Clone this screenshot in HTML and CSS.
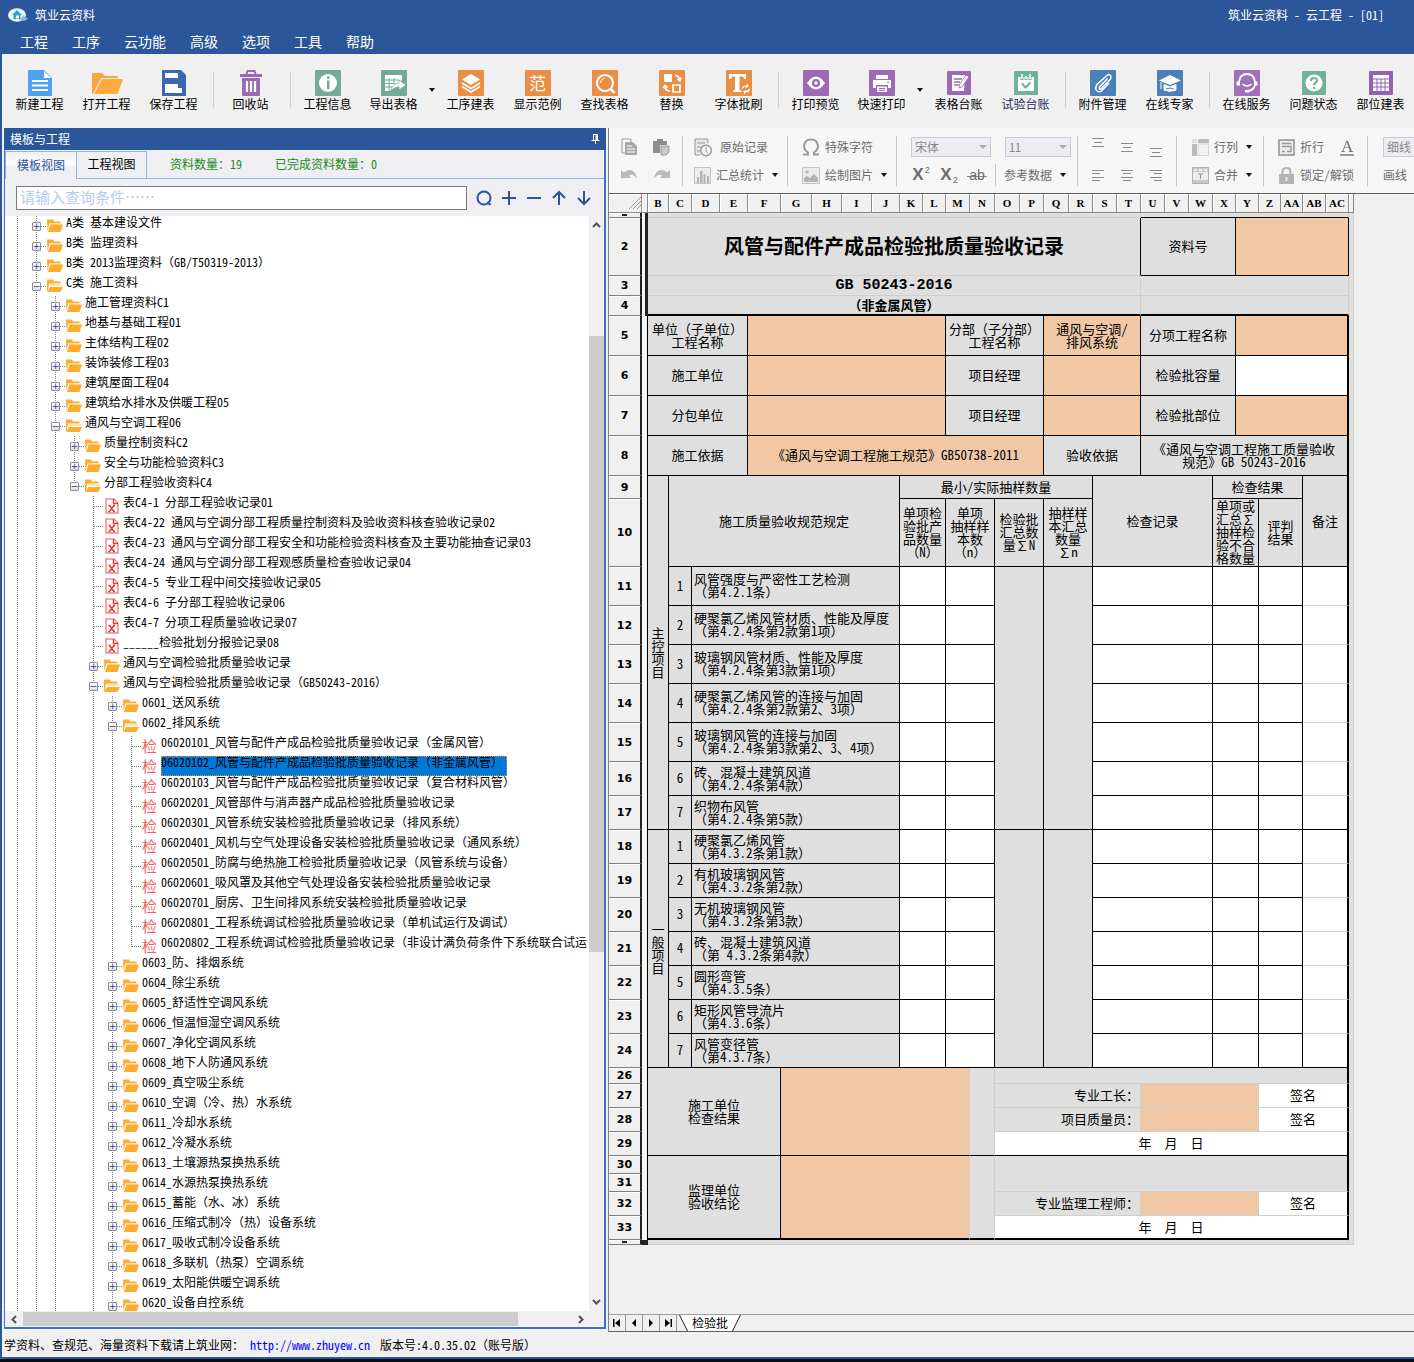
FILE: index.html
```html
<!DOCTYPE html>
<html lang="zh-CN">
<head>
<meta charset="utf-8">
<title>筑业云资料 - 云工程 - [01]</title>
<link rel="stylesheet" href="styles.css">
</head>
<body>
<svg class="defs" aria-hidden="true">
  <symbol id="closed" viewBox="0 0 16 14"><path d="M0 .5h6l1 2h6.500v2H2.500L.5 12z" fill="#ffab2b"/><path d="M2.500 4h12v1.500H3z" fill="#fbe3bd"/><path d="M3.500 5.500H16L13.500 13H1z" fill="#ffab2b"/></symbol>
  <symbol id="open" viewBox="0 0 16 14"><path d="M0 .5h6l1 2h6.500v2H2L1 12H0z" fill="#ffab2b"/><path d="M3 5h12v2H2.500z" fill="#fbe3bd"/><path d="M3 8h13l-2.500 5H.5z" fill="#ffab2b"/></symbol>
  <symbol id="xls" viewBox="0 0 14 16"><path d="M1 1h8l4 4v10H1z" fill="#fff" stroke="#f08a8a" stroke-width="1.500"/><path d="M8.500 1v4.500H13" fill="none" stroke="#e33" stroke-width="1.300"/><path d="M4.500 7.500l4.500 6M9 7.500l-4.500 6M3.500 7.500h2M8 7.500h2M3.500 13.500h2M8 13.500h2" stroke="#e12a2a" stroke-width="1.300"/></symbol>
</svg>
<div class="app">
  <header class="titlebar">
    <div class="caption">
      <svg width="22" height="16" viewBox="0 0 22 16"><ellipse cx="9" cy="8" rx="9" ry="6.800" fill="#eef5fb"/><path d="M11 13c4 1.500 7 1 9-2-2 0-3-1-4-3z" fill="#8cb6e4"/><path d="M4 8l5-5 5 5h-1.500v4h-7V8z" fill="#2f9fe0"/><path d="M8 8.500h3v3H8z" fill="#fff"/></svg>
      <span class="name">筑业云资料</span>
      <span class="doc">筑业云资料 - 云工程 - [01]</span>
    </div>
    <nav class="menu">
      <button>工程</button><button>工序</button><button>云功能</button><button>高级</button><button>选项</button><button>工具</button><button>帮助</button>
    </nav>
  </header>

  <div class="tools">
    <button class="tool"><svg viewBox="0 0 26 26"><path d="M1 1q0-1 1-1h15l8 8v17q0 1-1 1H2q-1 0-1-1z" fill="#4ea1f0"/><path d="M17 1v7h7z" fill="#fff"/><path d="M5 11h16M5 15.500h16M5 20h16" stroke="#fff" stroke-width="1.800"/></svg>新建工程</button>
    <button class="tool"><svg viewBox="0 0 34 26" class="wide"><path d="M2 4q0-1 1-1h9l3 3h12q1 0 1 2H11L3 24H2z" fill="#f9a63e"/><path d="M12 9h21l-5 14q0 1-1 1H4z" fill="#ffa940"/></svg>打开工程</button>
    <button class="tool"><svg viewBox="0 0 26 26"><path d="M1 0h19l5 5v21H1z" fill="#3a67ad"/><path d="M4 3h13v5H4zM4 14h17v9H4z" fill="#fff"/><path d="M17 14h4v4h-4z" fill="#3a67ad"/></svg>保存工程</button>
    <span class="sep"></span>
    <button class="tool"><svg viewBox="0 0 26 26"><path d="M2 4h22v3H2z" fill="#9b69b3"/><path d="M8.500 4l1-3h7l1 3" fill="none" stroke="#9b69b3" stroke-width="2"/><path d="M4 8h18v17q0 1-1 1H5q-1 0-1-1z" fill="#9b69b3"/><path d="M9 11v11M13 11v11M17 11v11" stroke="#fff" stroke-width="2.200"/></svg>回收站</button>
    <span class="sep"></span>
    <button class="tool"><svg viewBox="0 0 26 26"><rect width="26" height="26" rx="1" fill="#75aa99"/><circle cx="13" cy="13" r="9" fill="#fff"/><path d="M12 10.500h2.500V19H12zM12 6.500h2.500V9H12z" fill="#75aa99"/></svg>工程信息</button>
    <button class="tool drop"><svg viewBox="0 0 26 26"><rect width="26" height="26" rx="1" fill="#75aa99"/><path d="M4 5h17v5L9 21H4z" fill="#fff"/><path d="M4 10h14M4 13.500h9M4 17h7M8 8v13M13 8v6" stroke="#75aa99" stroke-width="1"/><path d="M10 21c1-6 5-8 8-8v-3l7 5-7 5v-3c-3 0-6 1-8 4z" fill="#fff" stroke="#75aa99" stroke-width=".8"/></svg>导出表格</button>
    <button class="caret" aria-label="导出表格"></button>
    <button class="tool"><svg viewBox="0 0 26 26"><rect width="26" height="26" rx="1" fill="#e98f45"/><path d="M13 4l9 5.500-9 5.500-9-5.500z" fill="#fff"/><path d="M4 13l9 5.500 9-5.500M4 16.500l9 5.500 9-5.500" fill="none" stroke="#fff" stroke-width="1.600"/></svg>工序建表</button>
    <button class="tool"><span class="glyph">范</span>显示范例</button>
    <button class="tool"><svg viewBox="0 0 26 26"><rect width="26" height="26" rx="1" fill="#e98f45"/><circle cx="13" cy="13" r="8" fill="none" stroke="#fff" stroke-width="2.200"/><path d="M18.500 18.500l4 4.500" stroke="#fff" stroke-width="2.600"/><path d="M8.500 13q0-4 4-5" stroke="#fff" fill="none"/></svg>查找表格</button>
    <button class="tool"><svg viewBox="0 0 26 26"><rect width="26" height="26" rx="1" fill="#e98f45"/><path d="M5 4h8v8H5z" fill="#fff"/><path d="M14 15h7v7h-7zM16 5.500q4 0 5 5M18.500 9l2.500 2 1-3.500M11 21q-5 0-5-5M4 18l2-2.500 2.500 2" fill="none" stroke="#fff" stroke-width="1.700"/></svg>替换</button>
    <button class="tool"><svg viewBox="0 0 26 26"><rect width="26" height="26" rx="1" fill="#e98f45"/><path d="M3 4h17v5h-2l-1-2.500h-3.500V20l2 .5V22H7v-1.500l2-.5V6.500H6L5 9H3z" fill="#fff"/><path d="M16.500 18.500q1-3.500 5-2.500M23.500 19q-1 3.500-5 2.500M21 14l1 2.500-2.500 1M19 24l-1-2.500 2.500-1" fill="none" stroke="#fff" stroke-width="1.200"/></svg>字体批刷</button>
    <span class="sep"></span>
    <button class="tool"><svg viewBox="0 0 26 26"><rect width="26" height="26" rx="1" fill="#9c69b7"/><path d="M4 13q9-13 18 0-9 13-18 0z" fill="#fff"/><circle cx="13" cy="13" r="4" fill="#9c69b7"/><circle cx="13" cy="13" r="1.700" fill="#fff"/></svg>打印预览</button>
    <button class="tool drop"><svg viewBox="0 0 26 26"><rect width="26" height="26" rx="1" fill="#9c69b7"/><path d="M7 5h12v4H7zM4 10h18v8h-3v-3H7v3H4zM8 16.500h10V22H8z" fill="#fff"/><path d="M10 18.500h6M10 20.300h6M18 12.300h2" stroke="#9c69b7"/></svg>快速打印</button>
    <button class="caret" aria-label="快速打印"></button>
    <button class="tool"><svg viewBox="0 0 26 26"><rect x="1" y="1" width="24" height="24" rx="1" fill="#9c69b7"/><path d="M6 5h13l-1 16H6z" fill="#fff"/><path d="M8 9h8M8 12h6M8 15h5" stroke="#9c69b7" stroke-width="1.300"/><path d="M20 5l3 2-7 10-3 1 .5-3.500z" fill="#fff" stroke="#9c69b7" stroke-width=".8"/></svg>表格台账</button>
    <button class="tool ink"><svg viewBox="0 0 26 26"><rect x="1" y="1" width="24" height="24" rx="1" fill="#6eb398"/><path d="M5 7h16v14H5z" fill="#fff"/><path d="M9 4v6M13 4v6M17 4v6" stroke="#6eb398" stroke-width="3"/><path d="M9 4v5M13 6v3M17 4v5" stroke="#fff" stroke-width="1.500"/><path d="M9 13.500l3.500 4 5-5" stroke="#6eb398" stroke-width="2" fill="none"/></svg>试验台账</button>
    <span class="sep"></span>
    <button class="tool"><svg viewBox="0 0 26 26"><rect width="26" height="26" rx="1" fill="#4a81b9"/><path d="M17.500 8.500l-8 8.500q-1 2.500 1.500 2l9.500-10q1.500-4-2.500-4.500L7 14.500q-3 5 1 7 2 1 4-1l7-7.500" fill="none" stroke="#fff" stroke-width="1.500"/></svg>附件管理</button>
    <button class="tool"><svg viewBox="0 0 26 26"><rect width="26" height="26" rx="1" fill="#4a81b9"/><path d="M13 5l11 5.500L13 15 2 10.500z" fill="#fff"/><path d="M7 14.500l6 2.500 6-2.500V20q-6 2.500-12 0zM4 12v7" fill="#fff" stroke="#fff"/><path d="M9 19q4-2 8 0" stroke="#4a81b9" fill="none"/></svg>在线专家</button>
    <span class="sep"></span>
    <button class="tool"><svg viewBox="0 0 26 26"><rect width="26" height="26" rx="1" fill="#a070ba"/><path d="M5 15V12q1-8 8-8t8 8v3M21 15q-1 5-7 6" fill="none" stroke="#fff" stroke-width="1.800"/><path d="M2.500 11.500H6v4H2.500zM20 11.500h3.500v4H20zM11 20h4v2.500h-4z" fill="#fff"/><path d="M8.500 14q4.500 4 9 0" fill="none" stroke="#fff" stroke-width="1.500"/></svg>在线服务</button>
    <button class="tool"><svg viewBox="0 0 26 26"><rect x="1" y="1" width="24" height="24" rx="1" fill="#6eb398"/><circle cx="13" cy="13" r="8.500" fill="#fff"/><path d="M10 11q0-3 3-3t3 2.500q0 1.500-1.500 2.300T13 15.500M13 17v2" fill="none" stroke="#6eb398" stroke-width="2.200"/></svg>问题状态</button>
    <button class="tool"><svg viewBox="0 0 26 26"><rect x="1" y="1" width="24" height="24" rx="1" fill="#9462b0"/><path d="M5 5h16v16H5z" fill="#fff"/><path d="M5 9h16M5 13h16M5 17h16M9 9v12M13 9v12M17 9v12" stroke="#9462b0"/></svg>部位建表</button>
  </div>

  <main class="work">
    <section class="panel">
      <h2 class="panel-head">模板与工程<svg width="9" height="10" viewBox="0 0 9 10"><path d="M2 0h5v6h1.500v1H5v3H4V7H.5V6H2z" fill="#fff"/><path d="M3 1h1.500v5H3z" fill="#2b579a"/></svg></h2>
      <div class="tabs">
        <button class="tab on">模板视图</button><button class="tab">工程视图</button>
        <span class="count">资料数量：19</span><span class="count">已完成资料数量：0</span>
      </div>
      <div class="search">
        <input type="text" placeholder="请输入查询条件……" aria-label="请输入查询条件">
        <button aria-label="查询"><svg viewBox="0 0 16 16"><circle cx="8" cy="8" r="6.500"/><path d="M11.500 12l3 3"/></svg></button>
        <button aria-label="展开"><svg viewBox="0 0 16 16"><path d="M8 1v14M1 8h14"/></svg></button>
        <button aria-label="折叠"><svg viewBox="0 0 16 16"><path d="M1 8h14"/></svg></button>
        <button aria-label="上一个"><svg viewBox="0 0 16 16"><path d="M8 15V2M2 8l6-6 6 6"/></svg></button>
        <button aria-label="下一个"><svg viewBox="0 0 16 16"><path d="M8 1v13M2 8l6 6 6-6"/></svg></button>
      </div>
      <div class="view">
        <div class="tree">
          <ul>
            <li><p><button>+</button><svg><use href="#closed"/></svg><a>A类 基本建设文件</a></p></li>
            <li><p><button>+</button><svg><use href="#closed"/></svg><a>B类 监理资料</a></p></li>
            <li><p><button>+</button><svg><use href="#closed"/></svg><a>B类 2013监理资料（GB/T50319-2013）</a></p></li>
            <li class="more"><p><button>−</button><svg><use href="#open"/></svg><a>C类 施工资料</a></p>
              <ul>
                <li><p><button>+</button><svg><use href="#closed"/></svg><a>施工管理资料C1</a></p></li>
                <li><p><button>+</button><svg><use href="#closed"/></svg><a>地基与基础工程01</a></p></li>
                <li><p><button>+</button><svg><use href="#closed"/></svg><a>主体结构工程02</a></p></li>
                <li><p><button>+</button><svg><use href="#closed"/></svg><a>装饰装修工程03</a></p></li>
                <li><p><button>+</button><svg><use href="#closed"/></svg><a>建筑屋面工程04</a></p></li>
                <li><p><button>+</button><svg><use href="#closed"/></svg><a>建筑给水排水及供暖工程05</a></p></li>
                <li class="more"><p><button>−</button><svg><use href="#open"/></svg><a>通风与空调工程06</a></p>
                  <ul>
                    <li><p><button>+</button><svg><use href="#closed"/></svg><a>质量控制资料C2</a></p></li>
                    <li><p><button>+</button><svg><use href="#closed"/></svg><a>安全与功能检验资料C3</a></p></li>
                    <li><p><button>−</button><svg><use href="#open"/></svg><a>分部工程验收资料C4</a></p>
                      <ul>
                        <li><p class="leaf"><svg><use href="#xls"/></svg><a>表C4-1 分部工程验收记录01</a></p></li>
                        <li><p class="leaf"><svg><use href="#xls"/></svg><a>表C4-22 通风与空调分部工程质量控制资料及验收资料核查验收记录02</a></p></li>
                        <li><p class="leaf"><svg><use href="#xls"/></svg><a>表C4-23 通风与空调分部工程安全和功能检验资料核查及主要功能抽查记录03</a></p></li>
                        <li><p class="leaf"><svg><use href="#xls"/></svg><a>表C4-24 通风与空调分部工程观感质量检查验收记录04</a></p></li>
                        <li><p class="leaf"><svg><use href="#xls"/></svg><a>表C4-5 专业工程中间交接验收记录05</a></p></li>
                        <li><p class="leaf"><svg><use href="#xls"/></svg><a>表C4-6 子分部工程验收记录06</a></p></li>
                        <li><p class="leaf"><svg><use href="#xls"/></svg><a>表C4-7 分项工程质量验收记录07</a></p></li>
                        <li><p class="leaf"><svg><use href="#xls"/></svg><a>______检验批划分报验记录08</a></p></li>
                        <li><p><button>+</button><svg><use href="#closed"/></svg><a>通风与空调检验批质量验收记录</a></p></li>
                        <li class="more"><p><button>−</button><svg><use href="#open"/></svg><a>通风与空调检验批质量验收记录（GB50243-2016）</a></p>
                          <ul>
                            <li><p><button>+</button><svg><use href="#closed"/></svg><a>0601_送风系统</a></p></li>
                            <li><p><button>−</button><svg><use href="#open"/></svg><a>0602_排风系统</a></p>
                              <ul>
                                <li><p class="leaf"><b>检</b><a>06020101_风管与配件产成品检验批质量验收记录（金属风管）</a></p></li>
                                <li><p class="leaf"><b>检</b><a class="sel">06020102_风管与配件产成品检验批质量验收记录（非金属风管）</a></p></li>
                                <li><p class="leaf"><b>检</b><a>06020103_风管与配件产成品检验批质量验收记录（复合材料风管）</a></p></li>
                                <li><p class="leaf"><b>检</b><a>06020201_风管部件与消声器产成品检验批质量验收记录</a></p></li>
                                <li><p class="leaf"><b>检</b><a>06020301_风管系统安装检验批质量验收记录（排风系统）</a></p></li>
                                <li><p class="leaf"><b>检</b><a>06020401_风机与空气处理设备安装检验批质量验收记录（通风系统）</a></p></li>
                                <li><p class="leaf"><b>检</b><a>06020501_防腐与绝热施工检验批质量验收记录（风管系统与设备）</a></p></li>
                                <li><p class="leaf"><b>检</b><a>06020601_吸风罩及其他空气处理设备安装检验批质量验收记录</a></p></li>
                                <li><p class="leaf"><b>检</b><a>06020701_厨房、卫生间排风系统安装检验批质量验收记录</a></p></li>
                                <li><p class="leaf"><b>检</b><a>06020801_工程系统调试检验批质量验收记录（单机试运行及调试）</a></p></li>
                                <li><p class="leaf"><b>检</b><a>06020802_工程系统调试检验批质量验收记录（非设计满负荷条件下系统联合试运</a></p></li>
                              </ul></li>
                            <li><p><button>+</button><svg><use href="#closed"/></svg><a>0603_防、排烟系统</a></p></li>
                            <li><p><button>+</button><svg><use href="#closed"/></svg><a>0604_除尘系统</a></p></li>
                            <li><p><button>+</button><svg><use href="#closed"/></svg><a>0605_舒适性空调风系统</a></p></li>
                            <li><p><button>+</button><svg><use href="#closed"/></svg><a>0606_恒温恒湿空调风系统</a></p></li>
                            <li><p><button>+</button><svg><use href="#closed"/></svg><a>0607_净化空调风系统</a></p></li>
                            <li><p><button>+</button><svg><use href="#closed"/></svg><a>0608_地下人防通风系统</a></p></li>
                            <li><p><button>+</button><svg><use href="#closed"/></svg><a>0609_真空吸尘系统</a></p></li>
                            <li><p><button>+</button><svg><use href="#closed"/></svg><a>0610_空调（冷、热）水系统</a></p></li>
                            <li><p><button>+</button><svg><use href="#closed"/></svg><a>0611_冷却水系统</a></p></li>
                            <li><p><button>+</button><svg><use href="#closed"/></svg><a>0612_冷凝水系统</a></p></li>
                            <li><p><button>+</button><svg><use href="#closed"/></svg><a>0613_土壤源热泵换热系统</a></p></li>
                            <li><p><button>+</button><svg><use href="#closed"/></svg><a>0614_水源热泵换热系统</a></p></li>
                            <li><p><button>+</button><svg><use href="#closed"/></svg><a>0615_蓄能（水、冰）系统</a></p></li>
                            <li><p><button>+</button><svg><use href="#closed"/></svg><a>0616_压缩式制冷（热）设备系统</a></p></li>
                            <li><p><button>+</button><svg><use href="#closed"/></svg><a>0617_吸收式制冷设备系统</a></p></li>
                            <li><p><button>+</button><svg><use href="#closed"/></svg><a>0618_多联机（热泵）空调系统</a></p></li>
                            <li><p><button>+</button><svg><use href="#closed"/></svg><a>0619_太阳能供暖空调系统</a></p></li>
                            <li class="more"><p><button>+</button><svg><use href="#closed"/></svg><a>0620_设备自控系统</a></p></li>
                          </ul></li>
                      </ul></li>
                  </ul></li>
              </ul></li>
          </ul>
        </div>
        <div class="vbar"><svg viewBox="0 0 9 6"><path d="M1 5l3.500-3.500L8 5"/></svg><span class="gap-a"></span><span class="thumb"></span><span class="gap-b"></span><svg viewBox="0 0 9 6"><path d="M1 1l3.500 3.500L8 1"/></svg></div>
      </div>
      <div class="hbar"><svg viewBox="0 0 6 9"><path d="M5 1L1.500 4.500 5 8"/></svg><span class="thumb"></span><span class="rest"></span><svg viewBox="0 0 6 9"><path d="M1 1l3.500 3.500L1 8"/></svg></div>
    </section>

    <section class="editor">
      <div class="ribbon">
        <div class="group g-clip">
          <div class="line"><button aria-label="复制"><svg width="17" height="18" viewBox="0 0 17 18"><path d="M1 1h9v3M4 15H1V1" fill="none" stroke="#999"/><path d="M4 4h8l4 4v9H4z" fill="#a8a8a8"/><path d="M6 8h5M6 11h8M6 14h8" stroke="#fff"/></svg></button><button aria-label="粘贴"><svg width="17" height="18" viewBox="0 0 17 18"><path d="M0 3h4V1h6v2h4v4H7v8H0z" fill="#8e8e8e"/><path d="M8 8h8v6l-3 3H8z" fill="#c8c8c8" stroke="#999"/></svg></button></div>
          <div class="line"><button aria-label="撤销"><svg width="17" height="12" viewBox="0 0 17 12"><path d="M0 1l3 2.500Q7 0 11 1.500t5 8.500q-3-5-8-4L10 9H0z" fill="#b9b9b9"/></svg></button><button aria-label="重做"><svg width="17" height="12" viewBox="0 0 17 12"><path d="M17 1l-3 2.500Q10 0 6 1.500T1 10q3-5 8-4L7 9h10z" fill="#b9b9b9"/></svg></button></div>
        </div>
        <div class="group g-rec">
          <div class="line"><button><svg width="18" height="19" viewBox="0 0 18 19"><path d="M6 17H1V1h13v4" fill="#e6e6e6" stroke="#999"/><path d="M3 5h8M3 9h4M3 13h3" stroke="#999"/><circle cx="12" cy="12.500" r="5.300" fill="#f5f5f5" stroke="#999" stroke-width="1.400"/><path d="M12 9v4l2.500 2" fill="none" stroke="#999"/></svg><span class="wide">原始记录</span></button></div>
          <div class="line"><button><svg width="17" height="17" viewBox="0 0 17 17"><path d="M.5.500h16v16H.5z" fill="#ececec" stroke="#c4c4c4"/><path d="M3 10h2v6H3zM6 4h2.500v12H6zM9.500 7h2v9h-2zM13 9h2v7h-2z" fill="#b3b3b3"/></svg>汇总统计<i></i></button></div>
        </div>
        <div class="group g-sym">
          <div class="line"><button><svg width="18" height="18" viewBox="0 0 18 18"><path d="M1 16.500h5v-2Q2 12 2 7.500 3 1.500 9 1.500t7 6q0 4.500-4 7v2h5" fill="none" stroke="#999" stroke-width="2"/></svg>特殊字符</button></div>
          <div class="line"><button><svg width="18" height="17" viewBox="0 0 18 17"><path d="M.5.500h17v16H.5z" fill="#ececec" stroke="#c4c4c4"/><path d="M2 15v-4l3-2 3 2 4-4 4 4v4z" fill="#b3b3b3"/><circle cx="5" cy="5" r="1.500" fill="#b3b3b3"/></svg>绘制图片<i></i></button></div>
        </div>
        <div class="group g-font">
          <div class="line"><span class="pick p-font"><select aria-label="字体"><option>宋体</option></select></span><span class="pick p-size"><select aria-label="字号"><option>11</option></select></span></div>
          <div class="line"><button class="x">X<sup>2</sup></button><button class="x">X<sub>2</sub></button><button class="ab">ab</button><span class="mini"></span><button>参考数据<i></i></button></div>
        </div>
        <div class="group g-align">
          <div class="line"><button aria-label="顶端对齐"><svg class="up" width="12" height="9" viewBox="0 0 12 9"><path d="M0 .5h12M2 4.500h8M0 8.500h12"/></svg></button><button aria-label="垂直居中"><svg width="12" height="9" viewBox="0 0 12 9"><path d="M0 .5h12M2 4.500h8M0 8.500h12"/></svg></button><button aria-label="底端对齐"><svg class="down" width="12" height="9" viewBox="0 0 12 9"><path d="M0 .5h12M2 4.500h8M0 8.500h12"/></svg></button></div>
          <div class="line"><button aria-label="左对齐"><svg width="12" height="11" viewBox="0 0 12 11"><path d="M0 .5h12M0 3.500h8M0 7.500h12M0 10.500h8"/></svg></button><button aria-label="居中"><svg width="12" height="11" viewBox="0 0 12 11"><path d="M0 .5h12M2 3.500h8M0 7.500h12M2 10.500h8"/></svg></button><button aria-label="右对齐"><svg width="12" height="11" viewBox="0 0 12 11"><path d="M0 .5h12M4 3.500h8M0 7.500h12M4 10.500h8"/></svg></button></div>
        </div>
        <div class="group g-cell">
          <div class="line"><button><svg width="17" height="17" viewBox="0 0 17 17"><path d="M0 0h5v4H0z" fill="#ddd"/><path d="M6 0h11v4H6zM0 5h5v12H0z" fill="#bbb"/><path d="M6 5h10.500v11.500H6z" fill="#f1f1f1" stroke="#d4d4d4"/></svg>行列<i></i></button></div>
          <div class="line"><button><svg width="17" height="17" viewBox="0 0 17 17"><path d="M.5.500h16v16H.5z" fill="#c9c9c9" stroke="#b0b0b0"/><path d="M2 2h3v2H2zM7 2h3v2H7zM12 2h3v2h-3zM1 5h15v8H1z" fill="#ececec"/><path d="M6 7h5M8.500 7v5" stroke="#999"/></svg>合并<i></i></button></div>
        </div>
        <div class="group g-wrap">
          <div class="line"><button><svg width="17" height="17" viewBox="0 0 17 17"><path d="M1 1h15v15H1z" fill="#ececec" stroke="#909090" stroke-width="1.500"/><path d="M4 4.500h9M4 7.500h9v5H9M4 12.500h3" fill="none" stroke="#999" stroke-width="1.400"/></svg>折行</button><button class="fc">A</button></div>
          <div class="line"><button><svg width="17" height="17" viewBox="0 0 17 17"><path d="M4.500 8V4.500q0-3.500 4-3.500t4 3.500V8" fill="none" stroke="#b3b3b3" stroke-width="2"/><path d="M1 7h15v9q0 1-1 1H2q-1 0-1-1z" fill="#b3b3b3"/><path d="M7.500 10h2v4h-2z" fill="#eee"/></svg><span>锁定/解锁</span></button></div>
        </div>
        <div class="group g-pen">
          <div class="line"><span class="pick p-pen"><select aria-label="线型"><option>细线</option></select></span></div>
          <div class="line"><button>画线</button></div>
        </div>
      </div>

      <div class="sheet">
        <table>
          <colgroup><col class="c33"><col class="c6"><col class="c21"><col class="c23"><col class="c28"><col class="c28"><col class="c33"><col class="c31"><col class="c30"><col class="c30"><col class="c28"><col class="c23"><col class="c23"><col class="c24"><col class="c25"><col class="c25"><col class="c24"><col class="c25"><col class="c24"><col class="c24"><col class="c24"><col class="c24"><col class="c24"><col class="c24"><col class="c23"><col class="c23"><col class="c22"><col class="c22"><col class="c23"><col class="c23"><col class="c5"></colgroup>
          <thead>
            <tr class="h19"><th class="corner"><svg width="12" height="12" viewBox="0 0 12 12"><path d="M0 12L12 0M4 12l8-8M8 12l4-4" stroke="#999"/></svg></th><th></th><th>B</th><th>C</th><th>D</th><th>E</th><th>F</th><th>G</th><th>H</th><th>I</th><th>J</th><th>K</th><th>L</th><th>M</th><th>N</th><th>O</th><th>P</th><th>Q</th><th>R</th><th>S</th><th>T</th><th>U</th><th>V</th><th>W</th><th>X</th><th>Y</th><th>Z</th><th>AA</th><th>AB</th><th>AC</th><th></th></tr>
          </thead>
          <tbody>
            <tr class="h5"><th><b></b></th><td class="edge dark" rowspan="4"></td><td colspan="19" class="gb gr"></td><td colspan="9" class="gr"></td><td class="tail" rowspan="33"></td></tr>
            <tr class="h58"><th>2</th><td colspan="19" class="title gb">风管与配件产成品检验批质量验收记录</td><td colspan="4">资料号</td><td colspan="5" class="o">&nbsp;</td></tr>
            <tr class="h20"><th>3</th><td colspan="19" class="code gb gr">GB 50243-2016</td><td colspan="9" class="gb gr"></td></tr>
            <tr class="h20"><th>4</th><td colspan="19" class="sub gr thick">（非金属风管）</td><td colspan="9" class="gr thick"></td></tr>
            <tr class="h40"><th>5</th><td class="edge" rowspan="28"></td><td colspan="4">单位（子单位）<br>工程名称</td><td colspan="7" class="o"></td><td colspan="4">分部（子分部）<br>工程名称</td><td colspan="4" class="o">通风与空调/<br>排风系统</td><td colspan="4">分项工程名称</td><td colspan="5" class="o end"></td></tr>
            <tr class="h40"><th>6</th><td colspan="4">施工单位</td><td colspan="7" class="o"></td><td colspan="4">项目经理</td><td colspan="4" class="o"></td><td colspan="4">检验批容量</td><td colspan="5" class="w end"></td></tr>
            <tr class="h40"><th>7</th><td colspan="4">分包单位</td><td colspan="7" class="o"></td><td colspan="4">项目经理</td><td colspan="4" class="o"></td><td colspan="4">检验批部位</td><td colspan="5" class="o end"></td></tr>
            <tr class="h40"><th>8</th><td colspan="4">施工依据</td><td colspan="11" class="o">《通风与空调工程施工规范》GB50738-2011</td><td colspan="4">验收依据</td><td colspan="9" class="end">《通风与空调工程施工质量验收<br>规范》GB 50243-2016</td></tr>
            <tr class="h23"><th>9</th><td rowspan="9">主<br>控<br>项<br>目</td><td colspan="8" rowspan="2">施工质量验收规范规定</td><td colspan="8">最小/实际抽样数量</td><td colspan="5" rowspan="2">检查记录</td><td colspan="4">检查结果</td><td colspan="2" rowspan="2" class="end">备注</td></tr>
            <tr class="h68"><th>10</th><td colspan="2">单项检<br>验批产<br>品数量<br>（N）</td><td colspan="2">单项<br>抽样样<br>本数<br>（n）</td><td colspan="2">检验批<br>汇总数<br>量∑N</td><td colspan="2">抽样样<br>本汇总<br>数量<br>∑n</td><td colspan="2">单项或<br>汇总∑<br>抽样检<br>验不合<br>格数量</td><td colspan="2">评判<br>结果</td></tr>
            <tr class="h39"><th>11</th><td>1</td><td colspan="7" class="l">风管强度与严密性工艺检测<br>（第4.2.1条）</td><td colspan="2" class="w"></td><td colspan="2" class="w"></td><td colspan="2" rowspan="7"></td><td colspan="2" rowspan="7"></td><td colspan="5" class="w"></td><td colspan="2" class="w"></td><td colspan="2" class="w"></td><td colspan="2" class="w gb end"></td></tr>
            <tr class="h39"><th>12</th><td>2</td><td colspan="7" class="l">硬聚氯乙烯风管材质、性能及厚度<br>（第4.2.4条第2款第1项）</td><td colspan="2" class="w"></td><td colspan="2" class="w"></td><td colspan="5" class="w"></td><td colspan="2" class="w"></td><td colspan="2" class="w"></td><td colspan="2" class="w gb end"></td></tr>
            <tr class="h39"><th>13</th><td>3</td><td colspan="7" class="l">玻璃钢风管材质、性能及厚度<br>（第4.2.4条第3款第1项）</td><td colspan="2" class="w"></td><td colspan="2" class="w"></td><td colspan="5" class="w"></td><td colspan="2" class="w"></td><td colspan="2" class="w"></td><td colspan="2" class="w gb end"></td></tr>
            <tr class="h39"><th>14</th><td>4</td><td colspan="7" class="l">硬聚氯乙烯风管的连接与加固<br>（第4.2.4条第2款第2、3项）</td><td colspan="2" class="w"></td><td colspan="2" class="w"></td><td colspan="5" class="w"></td><td colspan="2" class="w"></td><td colspan="2" class="w"></td><td colspan="2" class="w gb end"></td></tr>
            <tr class="h39"><th>15</th><td>5</td><td colspan="7" class="l">玻璃钢风管的连接与加固<br>（第4.2.4条第3款第2、3、4项）</td><td colspan="2" class="w"></td><td colspan="2" class="w"></td><td colspan="5" class="w"></td><td colspan="2" class="w"></td><td colspan="2" class="w"></td><td colspan="2" class="w gb end"></td></tr>
            <tr class="h34"><th>16</th><td>6</td><td colspan="7" class="l">砖、混凝土建筑风道<br>（第4.2.4条第4款）</td><td colspan="2" class="w"></td><td colspan="2" class="w"></td><td colspan="5" class="w"></td><td colspan="2" class="w"></td><td colspan="2" class="w"></td><td colspan="2" class="w gb end"></td></tr>
            <tr class="h34"><th>17</th><td>7</td><td colspan="7" class="l">织物布风管<br>（第4.2.4条第5款）</td><td colspan="2" class="w"></td><td colspan="2" class="w"></td><td colspan="5" class="w"></td><td colspan="2" class="w"></td><td colspan="2" class="w"></td><td colspan="2" class="w end"></td></tr>
            <tr class="h34"><th>18</th><td rowspan="7">一<br>般<br>项<br>目</td><td>1</td><td colspan="7" class="l">硬聚氯乙烯风管<br>（第4.3.2条第1款）</td><td colspan="2" class="w"></td><td colspan="2" class="w"></td><td colspan="2" rowspan="7"></td><td colspan="2" rowspan="7"></td><td colspan="5" class="w"></td><td colspan="2" class="w"></td><td colspan="2" class="w"></td><td colspan="2" class="w gb end"></td></tr>
            <tr class="h34"><th>19</th><td>2</td><td colspan="7" class="l">有机玻璃钢风管<br>（第4.3.2条第2款）</td><td colspan="2" class="w"></td><td colspan="2" class="w"></td><td colspan="5" class="w"></td><td colspan="2" class="w"></td><td colspan="2" class="w"></td><td colspan="2" class="w gb end"></td></tr>
            <tr class="h34"><th>20</th><td>3</td><td colspan="7" class="l">无机玻璃钢风管<br>（第4.3.2条第3款）</td><td colspan="2" class="w"></td><td colspan="2" class="w"></td><td colspan="5" class="w"></td><td colspan="2" class="w"></td><td colspan="2" class="w"></td><td colspan="2" class="w gb end"></td></tr>
            <tr class="h34"><th>21</th><td>4</td><td colspan="7" class="l">砖、混凝土建筑风道<br>（第 4.3.2条第4款）</td><td colspan="2" class="w"></td><td colspan="2" class="w"></td><td colspan="5" class="w"></td><td colspan="2" class="w"></td><td colspan="2" class="w"></td><td colspan="2" class="w gb end"></td></tr>
            <tr class="h34"><th>22</th><td>5</td><td colspan="7" class="l">圆形弯管<br>（第4.3.5条）</td><td colspan="2" class="w"></td><td colspan="2" class="w"></td><td colspan="5" class="w"></td><td colspan="2" class="w"></td><td colspan="2" class="w"></td><td colspan="2" class="w gb end"></td></tr>
            <tr class="h34"><th>23</th><td>6</td><td colspan="7" class="l">矩形风管导流片<br>（第4.3.6条）</td><td colspan="2" class="w"></td><td colspan="2" class="w"></td><td colspan="5" class="w"></td><td colspan="2" class="w"></td><td colspan="2" class="w"></td><td colspan="2" class="w gb end"></td></tr>
            <tr class="h34"><th>24</th><td>7</td><td colspan="7" class="l">风管变径管<br>（第4.3.7条）</td><td colspan="2" class="w"></td><td colspan="2" class="w"></td><td colspan="5" class="w"></td><td colspan="2" class="w"></td><td colspan="2" class="w"></td><td colspan="2" class="w end"></td></tr>
            <tr class="h16"><th>26</th><td colspan="5" rowspan="4">施工单位<br>检查结果</td><td colspan="7" rowspan="4" class="o gr"></td><td rowspan="4" class="gr"></td><td colspan="15" class="gb end"></td></tr>
            <tr class="h24"><th>27</th><td colspan="6" class="r gb gr">专业工长：</td><td colspan="5" class="o gb gr"></td><td colspan="4" class="w gb end">签名</td></tr>
            <tr class="h24"><th>28</th><td colspan="6" class="r gb gr">项目质量员：</td><td colspan="5" class="o gb gr"></td><td colspan="4" class="w gb end">签名</td></tr>
            <tr class="h24"><th>29</th><td colspan="15" class="w end">年　月　日</td></tr>
            <tr class="h18"><th>30</th><td colspan="5" rowspan="4" class="thick">监理单位<br>验收结论</td><td colspan="7" rowspan="4" class="o gr thick"></td><td rowspan="4" class="gr thick"></td><td colspan="15" rowspan="2" class="gb end"></td></tr>
            <tr class="h18"><th>31</th></tr>
            <tr class="h24"><th>32</th><td colspan="6" class="r gb gr">专业监理工程师：</td><td colspan="5" class="o gb gr"></td><td colspan="4" class="w gb end">签名</td></tr>
            <tr class="h24"><th>33</th><td colspan="15" class="w end thick">年　月　日</td></tr>
            <tr class="h5"><th><b></b></th><td class="knob"></td><td colspan="28" class="gb gr"></td></tr>
          </tbody>
        </table>
      </div>
      <div class="sheetbar">
        <button aria-label="第一页"><svg viewBox="0 0 8 8"><path d="M0 0h1.500v8H0zM7 0v8L2 4z"/></svg></button><button aria-label="上一页"><svg viewBox="0 0 8 8"><path d="M6 0v8L2 4z"/></svg></button><button aria-label="下一页"><svg viewBox="0 0 8 8"><path d="M2 0v8l4-4z"/></svg></button><button aria-label="最后一页"><svg viewBox="0 0 8 8"><path d="M6.500 0H8v8H6.500zM1 0v8l5-4z"/></svg></button>
        <button class="page"><svg width="9" height="16" viewBox="0 0 9 16"><path d="M1 0h8v16z" fill="#fff"/><path d="M.5 0l8 16" stroke="#222"/></svg><span>检验批</span><svg width="9" height="16" viewBox="0 0 9 16"><path d="M0 0h8L0 16z" fill="#fff"/><path d="M8.500 0l-8 16" stroke="#222"/></svg></button>
      </div>
    </section>
  </main>

  <footer class="status">学资料、查规范、海量资料下载请上筑业网：<a href="http://www.zhuyew.cn">http://www.zhuyew.cn</a><span>版本号:4.0.35.02（账号版）</span></footer>
</div>
</body>
</html>
```

FILE: styles.css
```css
* { box-sizing: border-box; }
html, body { height: 100%; }
body {
  margin: 0;
  padding-bottom: 3px;
  background: #080e18;
  color: #000;
  font: 12px/16px "Noto Sans Mono CJK SC", "Noto Sans CJK SC", sans-serif;
}
button, input, select { font: inherit; color: inherit; margin: 0; }
button { padding: 0; border: 0; background: none; white-space: nowrap; }
h2, p, ul { margin: 0; padding: 0; }
.defs { display: none; }

.app {
  display: flex;
  flex-direction: column;
  height: 100%;
  overflow: hidden;
  background: #f0f0f0;
  border-left: 2px solid #2b579a;
  border-bottom: 2px solid #2b579a;
}

/* title and menu */
.titlebar { flex: none; background: #2b579a; color: #fff; margin-left: -2px; height: 54px; }
.caption { display: flex; align-items: center; height: 30px; padding: 0 30px 0 8px; }
.caption .name { margin-left: 5px; }
.caption .doc { margin-left: auto; }
.menu { display: flex; gap: 24px; padding-left: 20px; font-size: 14px; line-height: 22px; }

/* main toolbar */
.tools { flex: none; display: flex; height: 73px; padding: 16px 0 0 4px; overflow: hidden; }
.tool { flex: none; width: 67px; display: flex; flex-direction: column; align-items: center; height: 43px; }
.tool.drop { width: 65px; }
.tool.ink { color: #2b2b50; }
.tool svg { width: 26px; height: 26px; display: block; }
.tool svg.wide { width: 34px; }
.glyph { width: 26px; height: 26px; background: #e98f45; border-radius: 1px; color: #fff; font-size: 17px; line-height: 25px; text-align: center; }
.sep { flex: none; width: 10px; height: 36px; margin-top: 2px; background: linear-gradient(#cfcfcf, #cfcfcf) 6px 0 / 1px 100% no-repeat; }
.caret { flex: none; width: 11px; height: 40px; display: flex; align-items: center; justify-content: center; }
.caret::after, .ribbon i { content: ""; border: 3px solid transparent; border-top: 4px solid #111; border-bottom: 0; }

.work { flex: 1; min-height: 0; display: flex; padding: 1px 0 0 2px; }

/* project panel */
.panel { flex: none; width: 602px; display: flex; flex-direction: column; margin-bottom: 3px; background: #eeeef3; border: solid #3f72bd; border-width: 0 2px 2px 1px; }
.panel-head { flex: none; height: 22px; display: flex; justify-content: space-between; align-items: center; margin: 0 -2px 0 -1px; padding: 0 6px; background: #2b579a; color: #fff; font-size: 12px; font-weight: 400; }
.tabs { flex: none; display: flex; height: 28px; border-bottom: 1px solid #91b3e8; margin-top: 1px; }
.tab { height: 27px; width: 71px; padding-bottom: 2px; border: 1px solid #91b3e8; border-bottom: 0; background: #f0f0f4; }
.tab.on { height: 28px; border-right: 0; color: #2b579a; background: #f0f0f4 linear-gradient(#eeeef3, #fff 45%, #eeeef3 55%); }
.count { color: #1a8a1a; line-height: 26px; margin-left: 23px; }
.count + .count { margin-left: 33px; }
.search { flex: none; display: flex; align-items: center; height: 37px; padding: 0 12px 0 11px; }
.search input { flex: 1; min-width: 0; height: 24px; padding: 0 3px 2px; border: 1px solid #7a7a7a; background: #fff; font-size: 15px; outline: 0; }
.search input::placeholder { color: #b4cdec; opacity: 1; }
.search button { width: 16px; height: 16px; margin-left: 9px; }
.search svg { display: block; width: 16px; height: 16px; fill: none; stroke: #2b579a; stroke-width: 2; }

.view { flex: 1; min-height: 0; display: flex; background: #fff; }
.tree { flex: 1; min-width: 0; overflow: hidden; position: relative; padding-left: 22px; }
.tree ul { list-style: none; }
.tree ul ul { margin-left: 19px; }
.tree li { position: relative; }
.tree::before, .tree li::before {
  content: "";
  position: absolute;
  left: 9px;
  top: 0;
  bottom: 0;
  width: 1px;
  background: repeating-linear-gradient(#808080 0 1px, transparent 1px 2px);
}
.tree::before { left: 12px; }
.tree li:last-child:not(.more)::before { bottom: auto; height: 11px; }
.tree p { position: relative; display: flex; height: 20px; padding-left: 5px; }
.tree p::before { content: ""; position: absolute; left: 10px; top: 10px; width: 9px; height: 1px; background: repeating-linear-gradient(90deg, #808080 0 1px, transparent 1px 2px); }
.tree p button { z-index: 1; width: 9px; height: 9px; margin-top: 6px; border: 1px solid #8b9098; border-radius: 1px; background: linear-gradient(#fff, #ddd); color: #24448c; font: 9px/7px "DejaVu Sans", sans-serif; display: flex; justify-content: center; }
.tree p svg { position: relative; flex: none; width: 16px; height: 14px; margin: 3px 3px 0 6px; }
.tree p.leaf svg { height: 16px; margin: 2px 3px 0 15px; }
.tree p b { flex: none; width: 16px; margin: 0 3px 0 15px; color: #f26060; font-size: 15px; font-weight: 400; line-height: 20px; }
.tree a { height: 20px; line-height: 12px; white-space: nowrap; padding-right: 4px; color: #000; }
.tree a.sel { background: #0078d7; outline: 1px dotted #e08a2c; outline-offset: -1px; }

.vbar { flex: none; width: 15px; display: flex; flex-direction: column; align-items: center; background: #f0f0f0; padding: 6px 0; }
.vbar svg { flex: none; width: 9px; height: 6px; }
.vbar svg, .hbar svg { fill: none; stroke: #555; stroke-width: 2; }
.thumb { background: #cdcdcd; }
.vbar .thumb { width: 100%; flex: 616; }
.gap-a { flex: 108; }
.gap-b { flex: 347; }
.hbar { flex: none; height: 16px; display: flex; align-items: center; padding: 0 20px 0 6px; background: #f0f0f0; }
.hbar svg { flex: none; width: 6px; height: 9px; }
.hbar .thumb { height: 14px; flex: 493; margin-left: 6px; }
.hbar .rest { flex: 60; }

/* formatting ribbon */
.editor { flex: 1; min-width: 0; display: flex; flex-direction: column; border-left: 1px solid #808080; margin-left: 2px; }
.ribbon { flex: none; display: flex; height: 65px; padding-top: 5px; background: #f6f6f6; color: #6c6c6c; overflow: hidden; }
.group { flex: none; padding-left: 14px; background: linear-gradient(#c8c8c8, #c8c8c8) right 3px / 1px 50px no-repeat; }
.group .line { display: flex; align-items: center; height: 28px; }
.group button { display: flex; align-items: center; gap: 5px; }
.ribbon i { margin-left: 3px; }
.g-clip { width: 74px; padding-left: 12px; }
.g-clip .line { gap: 15px; }
.g-rec { width: 105px; padding-left: 11px; }
.g-rec .wide { margin-left: 3px; }
.g-sym { width: 109px; }
.g-font { width: 181px; }
.g-font .line { gap: 8px; }
.g-align { width: 99px; }
.g-align .line { gap: 17px; }
.g-align svg { stroke: #888; }
.g-align .up { margin-bottom: 10px; }
.g-align .down { margin-top: 10px; }
.g-cell { width: 87px; padding-left: 15px; }
.g-wrap { width: 104px; }
.g-wrap .line { gap: 16px; }
.g-pen { width: 90px; padding-left: 15px; background: none; }
.pick { position: relative; display: block; }
.pick select { width: 100%; height: 20px; padding: 0 3px; appearance: none; border: 1px solid #c9c9dd; border-radius: 0; background: #ededf1; color: #888; }
.pick::after { content: ""; position: absolute; right: 4px; top: 8px; border: 4px solid transparent; border-top-color: #aaa; border-bottom: 0; }
.p-font { width: 80px; }
.p-size { width: 66px; margin-left: 6px; }
.p-pen { width: 80px; }
.group .x { width: 20px; gap: 1px; justify-content: center; font: bold 17px/20px "Liberation Sans", sans-serif; }
.x sup, .x sub { font-size: 9px; font-weight: 400; line-height: 10px; }
.x sup { margin-bottom: 10px; }
.x sub { margin-top: 10px; }
.group .ab { width: 20px; justify-content: center; background: linear-gradient(#888, #888) 0 60% / 100% 1px no-repeat; font: 14px/20px "Liberation Sans", sans-serif; }
.mini { width: 1px; height: 22px; background: #c8c8c8; }
.group .fc { display: block; width: 14px; height: 18px; border-bottom: 2px solid #999; font: 17px/17px "Liberation Serif", serif; }

/* spreadsheet */
.sheet { flex: 1; min-height: 0; overflow: hidden; border-top: 1px solid #606060; }
table { width: 745px; table-layout: fixed; border-collapse: separate; border-spacing: 0; font-size: 13px; line-height: 13px; }
.c5 { width: 5px; } .c6 { width: 6px; } .c21 { width: 21px; } .c22 { width: 22px; } .c23 { width: 23px; }
.c24 { width: 24px; } .c25 { width: 25px; } .c28 { width: 28px; } .c30 { width: 30px; } .c31 { width: 31px; } .c33 { width: 33px; }
.h5 { height: 5px; } .h16 { height: 16px; } .h18 { height: 18px; } .h19 { height: 19px; } .h20 { height: 20px; }
.h23 { height: 23px; } .h24 { height: 24px; } .h34 { height: 34px; } .h39 { height: 39px; } .h40 { height: 40px; }
.h58 { height: 58px; } .h68 { height: 68px; }
td { padding: 0 0 2px; }
th, .h5 > td { padding: 0; }
th { background: #f0f0f0; }
thead th { font: bold 11px/16px "Liberation Serif", serif; border: solid #8a8a8a; border-width: 0 1px 1px 0; box-shadow: inset 1px 1px #fff; white-space: nowrap; }
thead .corner { text-align: right; }
.corner svg { display: block; margin-left: auto; }
tbody th { border-bottom: 1px solid #808080; border-right: 2px solid #222; box-shadow: inset 0 1px #fff; font-family: "DejaVu Sans", sans-serif; font-size: 11px; }
tbody th b { display: block; width: 5px; height: 2px; margin: auto; background: #222; }
td { background: #dfdfdf; border: solid #000; border-width: 0 1px 1px 0; text-align: center; white-space: nowrap; }
td.o { background: #f0c8a5; }
td.w { background: #fff; }
td.l { text-align: left; padding-left: 2px; }
td.r { text-align: right; padding-right: 1px; }
td.gb { border-bottom-color: #d0d0c8; }
td.gr { border-right-color: #d0d0c8; }
td.thick { border-bottom: 2px solid #000; }
td.end { border-right: 2px solid #000; }
td.edge { background: #f4f4f4; border-bottom: 0; }
td.dark { border-right: 3px solid #222; }
td.knob { background: #222; border: 0; }
td.tail { border-color: #d0d0c8; }
td.title { font-size: 20px; font-weight: 700; line-height: 24px; }
td.code { padding: 0; font: bold 15px/16px "Liberation Mono", monospace; }
td.sub { font-weight: 700; }

.sheetbar { flex: none; height: 18px; display: flex; border-top: 1px solid #a0a0a0; border-bottom: 1px solid #606060; }
.sheetbar button { width: 17px; display: flex; align-items: center; justify-content: center; border-right: 1px solid #999; }
.sheetbar button svg { width: 8px; height: 8px; }
.sheetbar .page { width: auto; border: 0; margin-left: 2px; align-items: stretch; }
.sheetbar .page svg { width: 9px; height: 16px; }
.page span { background: #fff; padding: 0 4px; }

.status { flex: none; height: 25px; display: flex; align-items: center; padding-left: 2px; }
.status a { color: #00f; text-decoration: none; margin: 0 10px 0 6px; }
```
